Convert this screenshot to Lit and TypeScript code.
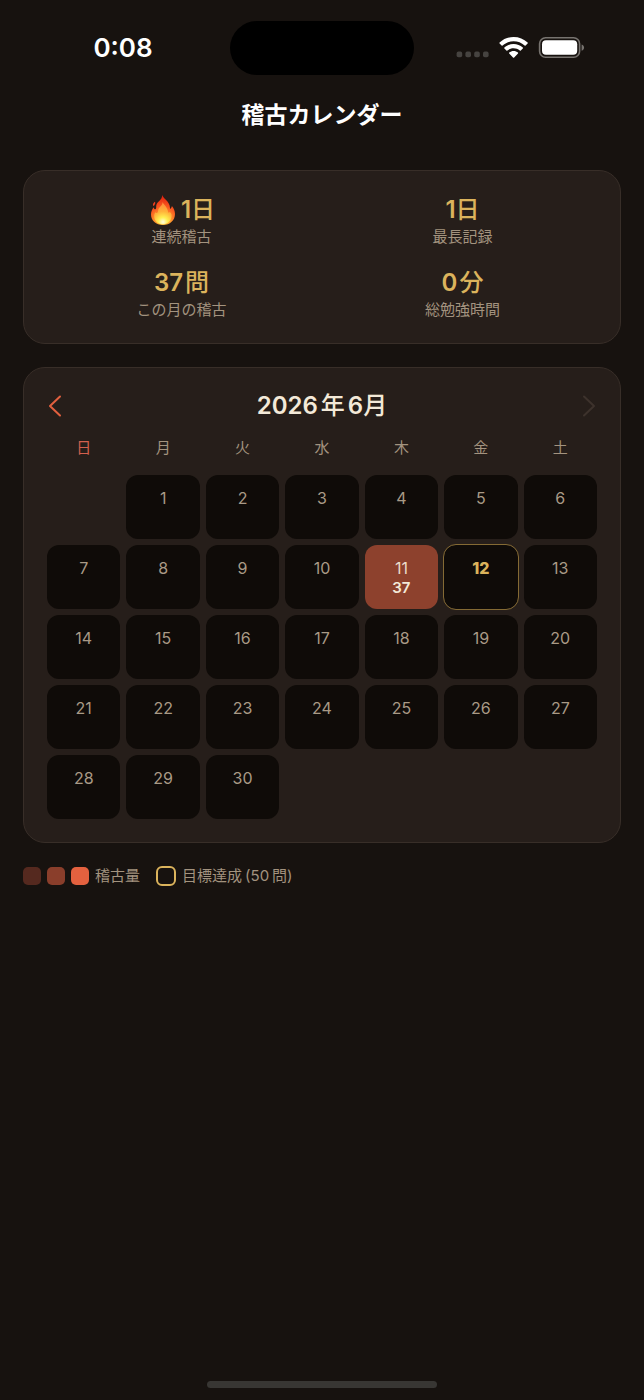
import { LitElement, html, css, svg, nothing } from "lit";
import { customElement, property, state } from "lit/decorators.js";
import { classMap } from "lit/directives/class-map.js";

interface Stat {
  value: string;
  unit: string;
  wide?: boolean;
  label: string;
  flame?: boolean;
}

const STATS: Stat[] = [
  { value: "1", unit: "日", label: "連続稽古", flame: true },
  { value: "1", unit: "日", label: "最長記録" },
  { value: "37", unit: "問", wide: true, label: "この月の稽古" },
  { value: "0", unit: "分", wide: true, label: "総勉強時間" },
];

const WEEKDAYS = ["日", "月", "火", "水", "木", "金", "土"];

const flameIcon = svg`
  <svg class="flame" viewBox="0 0 24 30" aria-hidden="true">
    <defs>
      <radialGradient id="outer" gradientUnits="userSpaceOnUse" cx="12" cy="26" r="25">
        <stop offset="0" stop-color="#ffd23a" />
        <stop offset="0.3" stop-color="#ff9a2e" />
        <stop offset="0.6" stop-color="#f9561f" />
        <stop offset="1" stop-color="#e0200f" />
      </radialGradient>
      <radialGradient id="inner" gradientUnits="userSpaceOnUse" cx="12" cy="27" r="19">
        <stop offset="0" stop-color="#fffde0" />
        <stop offset="0.25" stop-color="#ffee50" />
        <stop offset="0.55" stop-color="#ffb43a" />
        <stop offset="1" stop-color="#ff8a3a" />
      </radialGradient>
    </defs>
    <path fill="url(#outer)" d="M11.2 0C11.6 1.4 13 3 14.8 4.8C17.3 7.3 18.8 9.6 18.9 12.2C19 13.6 19.4 14 19.8 13.5C20.4 12.8 20.8 12 20.9 11C22.8 13 24 16 24 19C24 25.3 19 30 12 30C5 30 0 25.600 0 19.500C0 16.800 1 14.300 2.600 12.200C3 13.800 3.600 14.400 4.400 14.200C5.400 13.900 5.200 12.400 5.200 11.200C5.200 9 6.400 7.600 8 6.200C10 4.400 11.200 2.600 11.200 0Z" />
    <path fill="#f04020" d="M3.800 6.800C4.800 7.800 4.200 9.200 2.700 11.300C1.400 10.200 1.800 8.200 3.800 6.800Z" />
    <path fill="url(#inner)" d="M11.500 7C12.400 9.400 16.300 12 16.800 15.800C17 17.800 17.800 18.200 18.900 17C20.600 18.600 21 20.400 20.300 22.800C19.200 26.800 16 29.300 12 29.300C7.500 29.300 4 26.500 3.300 22.500C2.900 20.200 3.400 18.600 4.600 17.200C5.400 18.500 6.800 18.300 7 16.600C7.200 14 8 13 9.400 11.600C10.800 10.200 11.600 8.800 11.500 7Z" />
  </svg>
`;

@customElement("status-bar")
export class StatusBar extends LitElement {
  static styles = css`
    :host {
      display: grid;
      grid-template-columns: 1fr 184px 1fr;
      align-items: center;
      height: 54px;
      padding-top: 21px;
      color: #fff;
    }
    .time {
      justify-self: center;
      font-size: 26px;
      font-weight: 600;
      line-height: 32px;
      padding-left: 16px;
    }
    .island {
      height: 54px;
      border-radius: 27px;
      background: #000;
    }
    .icons {
      display: flex;
      align-items: center;
      justify-content: center;
      padding-right: 16px;
    }
  `;

  render() {
    return html`
      <span class="time">0:08</span>
      <span class="island"></span>
      <span class="icons">
        <svg width="130" height="24" viewBox="0 0 130 24" aria-hidden="true">
          <g fill="#464340">
            <rect x="0.600" y="15.600" width="5.600" height="5.600" rx="1.800" />
            <rect x="9.400" y="15.600" width="5.600" height="5.600" rx="1.800" />
            <rect x="18.200" y="15.600" width="5.600" height="5.600" rx="1.800" />
            <rect x="27" y="15.600" width="5.600" height="5.600" rx="1.800" />
          </g>
          <g transform="translate(43.600 1)" fill="#fff">
            <path d="M14 0C19.400 0 24.300 2 28 5.600Q28.500 6.100 28 6.600L26 8.600Q25.500 9 25 8.600C22 5.800 18.200 4.300 14 4.300C9.800 4.300 6 5.800 3 8.600Q2.500 9 2 8.600L0 6.600Q-.500 6.100 0 5.600C3.700 2 8.600 0 14 0Z" />
            <path d="M14 7.100C17.500 7.100 20.700 8.400 23.200 10.600Q23.700 11.100 23.200 11.600L21.200 13.500Q20.700 13.900 20.200 13.500C18.500 12 16.400 11.200 14 11.200C11.600 11.200 9.500 12 7.800 13.500Q7.300 13.900 6.800 13.500L4.800 11.600Q4.300 11.100 4.800 10.600C7.300 8.400 10.500 7.100 14 7.100Z" />
            <path d="M14 14C15.700 14 17.200 14.600 18.400 15.600Q18.900 16.100 18.400 16.600L14.600 20.400Q14 20.900 13.400 20.400L9.600 16.600Q9.100 16.100 9.600 15.600C10.800 14.600 12.300 14 14 14Z" />
          </g>
          <rect x="83.600" y="1.800" width="40" height="19.400" rx="6" fill="none" stroke="#77736f" stroke-width="1.600" />
          <rect x="86" y="4.200" width="35.200" height="14.600" rx="4" fill="#fff" />
          <path d="M125.600 8.500C128.900 9.500 128.900 13.700 125.600 14.700Z" fill="#77736f" />
        </svg>
      </span>
    `;
  }
}

@customElement("stats-card")
export class StatsCard extends LitElement {
  @property({ attribute: false }) stats: Stat[] = [];

  static styles = css`
    :host {
      display: block;
    }
    .grid {
      display: grid;
      grid-template-columns: 1fr 1fr;
      gap: 20px 12px;
      margin: 0;
    }
    .stat {
      display: flex;
      flex-direction: column-reverse;
      align-items: center;
      gap: 2px;
    }
    .value {
      display: flex;
      align-items: center;
      margin: 0;
      color: #dbb35c;
      font-size: 24px;
      font-weight: 600;
      line-height: 31px;
    }
    .unit {
      font-weight: 500;
    }
    .wide .unit {
      margin-left: 2px;
    }
    .label {
      color: #a3937f;
      font-size: 15px;
      line-height: 20px;
    }
    .flame {
      width: 24px;
      height: 30px;
      margin: 0 6px 0 3px;
    }
  `;

  render() {
    return html`
      <dl class="grid">
        ${this.stats.map(
          (s) => html`
            <div class="stat">
              <dt class="label">${s.label}</dt>
              <dd class=${classMap({ value: true, wide: !!s.wide })}>
                ${s.flame ? flameIcon : nothing}<span>${s.value}</span><span class="unit">${s.unit}</span>
              </dd>
            </div>
          `,
        )}
      </dl>
    `;
  }
}

@customElement("practice-calendar")
export class PracticeCalendar extends LitElement {
  @property({ type: Number }) year = 2026;
  @property({ type: Number }) month = 6;
  @property({ type: Number }) today = 12;
  @property({ attribute: false }) counts: Record<number, number> = {};

  static styles = css`
    :host {
      display: block;
    }
    .header {
      display: flex;
      align-items: center;
      justify-content: space-between;
      height: 30px;
    }
    .title {
      display: flex;
      gap: 3px;
      margin: 0;
      color: #f3e9d8;
      font-size: 24px;
      font-weight: 600;
      line-height: 30px;
    }
    .cjk {
      font-weight: 500;
    }
    .nav {
      display: flex;
      padding: 4px 1px;
      border: 0;
      background: none;
      color: #e2603f;
      cursor: pointer;
    }
    .nav:disabled {
      color: #3d322c;
      cursor: default;
    }
    .nav svg {
      width: 14px;
      height: 22px;
      fill: none;
      stroke: currentColor;
      stroke-width: 2;
      stroke-linecap: round;
      stroke-linejoin: round;
    }
    .table,
    .body {
      display: block;
    }
    .table {
      margin-top: 17px;
    }
    .head {
      display: block;
      margin-bottom: 17px;
    }
    .row {
      display: grid;
      grid-template-columns: repeat(7, 1fr);
      gap: 6px;
    }
    .row + .row {
      margin-top: 6px;
    }
    .weekday {
      padding: 0;
      color: #a3937f;
      font-size: 15px;
      font-weight: 400;
      line-height: 20px;
      text-align: center;
    }
    .sunday {
      color: #d3604e;
    }
    .cell {
      box-sizing: border-box;
      display: flex;
      flex-direction: column;
      align-items: center;
      height: 64px;
      padding: 13px 0 0;
      border-radius: 12px;
      background: #0f0b08;
      color: #a99a86;
      font-size: 16px;
      line-height: 20px;
    }
    .empty {
      background: none;
    }
    .practiced {
      background: #8d412d;
      color: #eadccb;
    }
    .today {
      outline: 1px solid #846a34;
      color: #dbb35c;
      font-weight: 800;
    }
    .count {
      color: #f3e9d8;
      font-size: 15px;
      font-weight: 600;
      line-height: 20px;
    }
  `;

  private get weeks(): number[][] {
    const lead = new Date(this.year, this.month - 1, 1).getDay();
    const days = new Date(this.year, this.month, 0).getDate();
    const weeks: number[][] = [];
    for (let start = 1 - lead; start <= days; start += 7) {
      weeks.push(Array.from({ length: 7 }, (_, i) => (start + i > 0 && start + i <= days ? start + i : 0)));
    }
    return weeks;
  }

  private cell(day: number) {
    const count = this.counts[day];
    return html`
      <td
        class=${classMap({
          cell: true,
          empty: day === 0,
          practiced: !!count,
          today: day === this.today,
        })}
      >
        ${day ? html`<span>${day}</span>` : nothing}
        ${count ? html`<span class="count">${count}</span>` : nothing}
      </td>
    `;
  }

  render() {
    return html`
      <div class="header">
        <button class="nav" type="button" aria-label="前の月">
          <svg viewBox="0 0 14 22"><path d="M12 1.500L2 11L12 20.500" /></svg>
        </button>
        <h2 class="title">
          <span>${this.year}</span><span class="cjk">年</span><span>${this.month}<span class="cjk">月</span></span>
        </h2>
        <button class="nav" type="button" aria-label="次の月" disabled>
          <svg viewBox="0 0 14 22"><path d="M2 1.500L12 11L2 20.500" /></svg>
        </button>
      </div>
      <table class="table">
        <thead class="head">
          <tr class="row">
            ${WEEKDAYS.map((d, i) => html`<th scope="col" class=${classMap({ weekday: true, sunday: i === 0 })}>${d}</th>`)}
          </tr>
        </thead>
        <tbody class="body">
          ${this.weeks.map((week) => html`<tr class="row">${week.map((d) => this.cell(d))}</tr>`)}
        </tbody>
      </table>
    `;
  }
}

@customElement("calendar-legend")
export class CalendarLegend extends LitElement {
  @property({ type: Number }) goal = 50;

  static styles = css`
    :host {
      display: flex;
      align-items: center;
      gap: 16px;
      color: #a3937f;
      font-size: 15px;
      line-height: 20px;
    }
    .item {
      display: flex;
      align-items: center;
      gap: 6px;
    }
    .swatch {
      box-sizing: border-box;
      width: 18px;
      height: 18px;
      border-radius: 5px;
    }
    .low {
      background: #55291f;
    }
    .mid {
      background: #8a3e2b;
    }
    .high {
      background: #e4613f;
    }
    .goal {
      width: 20px;
      height: 20px;
      border: 2px solid #dbb35c;
      border-radius: 6px;
    }
    .number {
      margin: 0 3px;
    }
  `;

  render() {
    return html`
      <span class="item">
        <span class="swatch low"></span>
        <span class="swatch mid"></span>
        <span class="swatch high"></span>
        <span>稽古量</span>
      </span>
      <span class="item">
        <span class="swatch goal"></span>
        <span>目標達成<span class="number">(${this.goal}</span>問)</span>
      </span>
    `;
  }
}

@customElement("app-root")
export class AppRoot extends LitElement {
  @state() private counts: Record<number, number> = { 11: 37 };

  static styles = css`
    :host {
      display: flex;
      flex-direction: column;
      box-sizing: border-box;
      min-height: 100vh;
      padding-bottom: 12px;
      background: #17120f;
      font-family: Inter, "Noto Sans CJK JP", sans-serif;
    }
    .title {
      margin: 23px 0 0;
      color: #fff;
      font-size: 23px;
      font-weight: 600;
      line-height: 34px;
      text-align: center;
    }
    .content {
      flex: 1;
      display: flex;
      flex-direction: column;
      gap: 23px;
      padding: 38px 23px 0;
    }
    .card {
      padding: 23px;
      border: 1px solid #382e28;
      border-radius: 22px;
      background: #261e1a;
    }
    .home {
      align-self: center;
      width: 230px;
      height: 7px;
      border-radius: 4px;
      background: #383633;
    }
  `;

  render() {
    return html`
      <status-bar></status-bar>
      <h1 class="title">稽古カレンダー</h1>
      <main class="content">
        <stats-card class="card" .stats=${STATS}></stats-card>
        <practice-calendar class="card" .counts=${this.counts}></practice-calendar>
        <calendar-legend></calendar-legend>
      </main>
      <div class="home"></div>
    `;
  }
}
